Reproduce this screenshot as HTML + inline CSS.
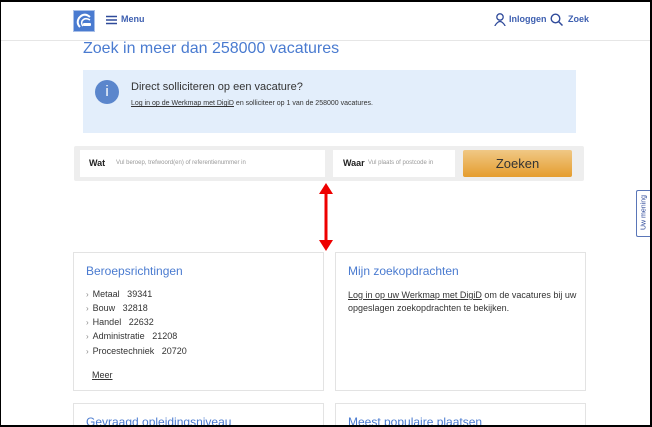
<!DOCTYPE html>
<html style="overflow:hidden;width:652px;height:427px"><head><style>
*{margin:0;padding:0;box-sizing:border-box}
body{width:652px;height:427px;overflow:hidden;background:#fff;font-family:"Liberation Sans",sans-serif;position:relative}
.frame{position:absolute;left:0;top:0;width:652px;height:427px;border:1px solid #000;border-top-width:2px;border-right-width:2px;border-bottom-width:2px;pointer-events:none;z-index:10}
.a{position:absolute}
.hdr{left:0;top:0;width:652px;height:41px;border-bottom:1px solid #e6e6e6}
.blue{color:#3d5fb0}
.card{position:absolute;border:1px solid #e3e3e3;background:#fff}
.card h3{font-weight:normal;font-size:12px;color:#4a7bd0;position:absolute;left:12px;top:11px}
.li{font-size:9px;color:#333;position:absolute;left:12px}
.li:before{content:"›";color:#888;margin-right:4px;font-size:8px}
u{color:#333}
</style></head><body>
<div class="frame"></div>
<div class="a hdr"></div>
<div class="a" style="left:73px;top:10px;width:22px;height:22px;background:#4a7bd0;border:1px solid #a9c0e8">
<svg width="20" height="20" viewBox="0 0 20 20"><path d="M16 6 Q10 1 5 7 Q2 12 6 16" fill="none" stroke="#fff" stroke-width="2"/><path d="M16 9 Q11 6 8 10 Q7 13 9 15" fill="none" stroke="#fff" stroke-width="1.5"/><rect x="9" y="12" width="8" height="3" rx="1" fill="#fff"/></svg></div>
<svg class="a" style="left:106px;top:15px" width="11" height="10"><path d="M0 1.5H11M0 5H11M0 8.5H11" stroke="#2f4a9a" stroke-width="1.5"/></svg>
<div class="a blue" style="left:121px;top:14px;font-size:9px;font-weight:bold">Menu</div>
<svg class="a" style="left:494px;top:13px" width="12" height="13"><circle cx="6" cy="4" r="3.2" fill="none" stroke="#2f4a9a" stroke-width="1.3"/><path d="M0.8 13 Q6 4 11.2 13" fill="none" stroke="#2f4a9a" stroke-width="1.3"/></svg>
<div class="a blue" style="left:509px;top:14px;font-size:9px;font-weight:bold">Inloggen</div>
<svg class="a" style="left:550px;top:13px" width="13" height="13"><circle cx="5.5" cy="5.5" r="4.3" fill="none" stroke="#2f4a9a" stroke-width="1.4"/><path d="M8.5 8.5L12.5 12.5" stroke="#2f4a9a" stroke-width="1.5"/></svg>
<div class="a blue" style="left:568px;top:14px;font-size:9px;font-weight:bold">Zoek</div>
<div class="a" style="left:83px;top:40px;font-size:16px;color:#4a7bd0">Zoek in meer dan 258000 vacatures</div>
<div class="a" style="left:83px;top:70px;width:493px;height:63px;background:#e3eefb"></div>
<div class="a" style="left:95px;top:80px;width:24px;height:24px;border-radius:50%;background:#5b86cc;color:#fff;text-align:center;font-size:15px;line-height:24px">i</div>
<div class="a" style="left:131px;top:81px;font-size:11px;color:#333">Direct solliciteren op een vacature?</div>
<div class="a" style="left:131px;top:100px;font-size:7px;color:#333"><u>Log in op de Werkmap met DigiD</u> en solliciteer op 1 van de 258000 vacatures.</div>
<div class="a" style="left:74px;top:146px;width:510px;height:35px;background:#eeeeee;border-radius:2px"></div>
<div class="a" style="left:80px;top:150px;width:245px;height:27px;background:#fff"></div>
<div class="a" style="left:89px;top:158px;font-size:9px;color:#222;font-weight:bold">Wat</div>
<div class="a" style="left:116px;top:160px;font-size:6px;color:#999">Vul beroep, trefwoord(en) of referentienummer in</div>
<div class="a" style="left:333px;top:150px;width:122px;height:27px;background:#fff"></div>
<div class="a" style="left:343px;top:158px;font-size:9px;color:#222;font-weight:bold">Waar</div>
<div class="a" style="left:368px;top:160px;font-size:6px;color:#999">Vul plaats of postcode in</div>
<div class="a" style="left:463px;top:150px;width:109px;height:27px;background:linear-gradient(#f0c885,#e59d2e);border-radius:2px;text-align:center;font-size:13px;line-height:27px;color:#333">Zoeken</div>
<svg class="a" style="left:318px;top:182px" width="16" height="70"><path d="M8 8V62" stroke="#e00" stroke-width="3"/><path d="M1 12L8 1L15 12Z M1 58L8 69L15 58Z" fill="#e00"/></svg>
<div class="a" style="left:636px;top:190px;width:15px;height:47px;border:1px solid #5a76b8;border-right:none;background:#fff;border-radius:2px 0 0 2px"><div style="transform:rotate(-90deg);transform-origin:center;position:absolute;left:-16px;top:18px;width:46px;font-size:7px;color:#2f4a9a;text-align:center">Uw mening</div></div>
<div class="card" style="left:73px;top:252px;width:251px;height:139px"><h3>Beroepsrichtingen</h3>
<div class="li" style="top:36px">Metaal&nbsp;&nbsp; 39341</div>
<div class="li" style="top:50px">Bouw&nbsp;&nbsp; 32818</div>
<div class="li" style="top:64px">Handel&nbsp;&nbsp; 22632</div>
<div class="li" style="top:78px">Administratie&nbsp;&nbsp; 21208</div>
<div class="li" style="top:93px">Procestechniek&nbsp;&nbsp; 20720</div>
<div style="position:absolute;left:18px;top:117px;font-size:9px"><u>Meer</u></div></div>
<div class="card" style="left:335px;top:252px;width:251px;height:139px"><h3>Mijn zoekopdrachten</h3>
<div style="position:absolute;left:12px;top:36px;font-size:9px;color:#333;line-height:13px;width:235px"><u>Log in op uw Werkmap met DigiD</u> om de vacatures bij uw opgeslagen zoekopdrachten te bekijken.</div></div>
<div class="card" style="left:73px;top:403px;width:251px;height:24px;border-bottom:none;overflow:hidden"><h3>Gevraagd opleidingsniveau</h3></div>
<div class="card" style="left:335px;top:403px;width:251px;height:24px;border-bottom:none;overflow:hidden"><h3>Meest populaire plaatsen</h3></div>
</body></html>
